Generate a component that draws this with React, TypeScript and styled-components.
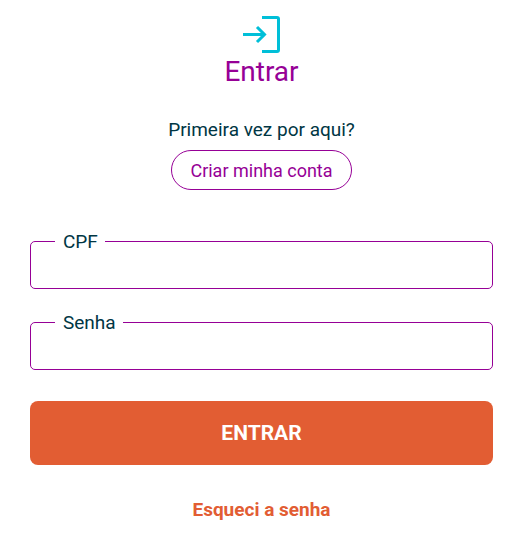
import React from "react";
import styled, { createGlobalStyle } from "styled-components";

const Global = createGlobalStyle`
  * { box-sizing: border-box; }
  body { margin: 0; background: #fff; color: #003644; font-family: Roboto, "Liberation Sans", sans-serif; }
`;
const Page = styled.main`
  display: flex;
  flex-direction: column;
  align-items: center;
  padding: 10px 30px 24px;
`;
const LoginIcon = styled.svg`
  display: block;
  width: 47px;
  height: 48px;
  color: #00bfd8;
`;
const Title = styled.h1`
  margin: 0 0 32px;
  color: #960096;
  font-size: 28px;
  line-height: 28px;
  font-weight: 400;
`;
const Question = styled.p`
  margin: 0 0 8px;
  font-size: 19px;
  line-height: 24px;
`;
const CreateLink = styled.a`
  height: 40px;
  padding: 0 18px;
  border: 1px solid #960096;
  border-radius: 20px;
  color: #960096;
  font-size: 18px;
  line-height: 40px;
  text-decoration: none;
`;
const Form = styled.form`
  display: flex;
  flex-direction: column;
  width: 100%;
  margin-top: 40px;
`;
const Field = styled.fieldset`
  min-width: 0;
  margin: 0 0 22px;
  padding: 0 8px;
  border: 1px solid #960096;
  border-radius: 5px;
`;
const Legend = styled.legend`
  margin-left: 16px;
  padding: 2px 7px 0 8px;
  font-size: 19px;
  line-height: 20px;
`;
const Input = styled.input`
  display: block;
  width: 100%;
  height: 36px;
  padding: 0 16px;
  border: 0;
  outline: 0;
  background: transparent;
  color: inherit;
  font: inherit;
  font-size: 19px;
`;
const Submit = styled.button`
  height: 64px;
  margin-top: 9px;
  padding: 0 16px;
  border: 0;
  border-radius: 8px;
  background: #e25d33;
  color: #fff;
  font: 700 21px/24px Roboto, "Liberation Sans", sans-serif;
`;
const Forgot = styled.a`
  margin-top: 33px;
  color: #e25d33;
  font-size: 19px;
  line-height: 24px;
  font-weight: 700;
  text-decoration: none;
`;

export default function App() {
  return (
    <Page>
      <Global />
      <LoginIcon viewBox="0 0 47 48" fill="none" stroke="currentColor" strokeWidth="3" aria-hidden="true">
        <path d="M24 7.500H39a1.500 1.500 0 0 1 1.500 1.500V40a1.500 1.500 0 0 1-1.500 1.500H24M5 24.500H27M19 17L26.500 24.500L19 32" />
      </LoginIcon>
      <Title>Entrar</Title>
      <Question>Primeira vez por aqui?</Question>
      <CreateLink href="#criar">Criar minha conta</CreateLink>
      <Form>
        <Field>
          <Legend><label htmlFor="cpf">CPF</label></Legend>
          <Input id="cpf" type="text" inputMode="numeric" />
        </Field>
        <Field>
          <Legend><label htmlFor="senha">Senha</label></Legend>
          <Input id="senha" type="password" />
        </Field>
        <Submit type="button">ENTRAR</Submit>
      </Form>
      <Forgot href="#senha">Esqueci a senha</Forgot>
    </Page>
  );
}
